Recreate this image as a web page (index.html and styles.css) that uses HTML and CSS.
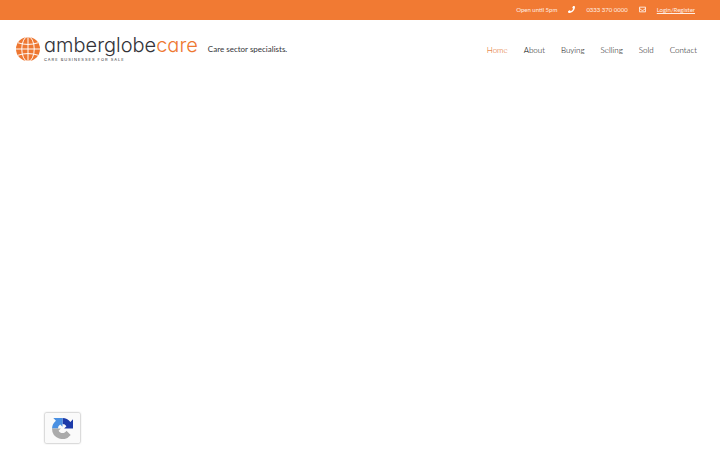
FILE: index.html
```
<!DOCTYPE html>
<html lang="en">
<head>
<meta charset="utf-8">
<title>Amberglobe Care</title>
<link rel="stylesheet" href="styles.css">
</head>
<body>
<div class="topbar">
  <span>Open until 5pm</span>
  <svg class="icon" viewBox="0 0 512 512" aria-hidden="true"><path fill="currentColor" d="M493 25 389 1c-11-3-23 3-27 14l-48 112c-4 10-1 21 7 28l60 49c-36 76-98 139-177 177l-49-60c-7-8-18-11-28-7L15 362c-11 4-17 16-14 27l24 104c2 11 12 19 23 19 256 0 464-207 464-464 0-11-8-21-19-23z"/></svg>
  <a href="tel:03333700000">0333 370 0000</a>
  <svg class="icon" viewBox="0 0 512 512" aria-hidden="true"><path fill="none" stroke="currentColor" stroke-width="60" stroke-linejoin="round" d="M30 85h452v342H30zM30 180l171 125q55 42 110 0l171-125"/></svg>
  <a class="login" href="#">Login/Register</a>
</div>
<header class="header">
  <a class="logo" href="#">
    <svg class="globe" viewBox="0 0 50 50" aria-hidden="true">
      <circle cx="25" cy="25" r="25" fill="#ee7731"/>
      <g fill="none" stroke="#fff" stroke-width="2"><path d="M25 0v50M0 25h50M4 12q21 7 42 0M4 38q21-7 42 0"/><ellipse cx="25" cy="25" rx="13" ry="26"/></g>
    </svg>
    <span class="brand">
      <span class="name">amberglobe<span class="care">care</span></span>
      <span class="strap">CARE BUSINESSES FOR SALE</span>
    </span>
  </a>
  <p class="tagline">Care sector specialists.</p>
  <nav class="nav">
    <a class="active" href="#">Home</a>
    <a href="#">About</a>
    <a href="#">Buying</a>
    <a href="#">Selling</a>
    <a href="#">Sold</a>
    <a href="#">Contact</a>
  </nav>
</header>
<div class="badge">
  <svg viewBox="0 0 64 64" role="img" aria-label="reCAPTCHA">
    <path fill="#1c3aa9" d="M64 32V4l-8 8A32 32 0 0 0 32 0v18a14 14 0 0 1 12 7l-7 7z"/>
    <path fill="#4a90e2" d="M32 0H4l8 8A32 32 0 0 0 0 32h18a14 14 0 0 1 7-12l7 7z"/>
    <path fill="#ababab" d="M0 32a32 32 0 0 0 57 20L44 39a14 14 0 0 1-24 0l7-7z"/>
  </svg>
</div>
</body>
</html>
```
FILE: styles.css
```
* {
  box-sizing: border-box;
}

body {
  margin: 0;
  background: #fff;
  color: #333338;
  font-family: Lato, sans-serif;
}

a {
  color: inherit;
  text-decoration: none;
}

.topbar {
  display: flex;
  align-items: center;
  justify-content: flex-end;
  gap: 11px;
  height: 20px;
  padding: 0 25px 1px 0;
  background: #f17a33;
  color: #ffeee4;
  font-size: 6px;
}

.icon {
  width: 7px;
  height: 7px;
  color: #fff;
}

.login {
  text-decoration: underline;
}

.header {
  display: flex;
  align-items: center;
  padding: 14px 23px 0 16px;
}

.logo {
  display: flex;
  align-items: center;
  gap: 4px;
}

.globe {
  width: 24px;
  height: 24px;
}

.brand {
  display: flex;
  flex-direction: column;
}

.name {
  font-family: Inter, sans-serif;
  font-feature-settings: "cv11";
  font-size: 20px;
  font-weight: 300;
  line-height: 23px;
}

.care {
  color: #ee7731;
}

.strap {
  font-family: Inter, sans-serif;
  font-size: 4px;
  line-height: 6px;
  letter-spacing: 1px;
}

.tagline {
  margin: 0 0 0 10px;
  font-size: 8px;
}

.nav {
  display: flex;
  gap: 16px;
  margin-left: auto;
  padding-top: 2px;
  color: #000;
  font-size: 8px;
  font-weight: 300;
}

.active {
  color: #dc5600;
}

.badge {
  position: fixed;
  bottom: 7px;
  left: 45px;
  display: grid;
  place-items: center;
  width: 35px;
  height: 30px;
  border-radius: 1px;
  background: #fafafa;
  box-shadow: 0 0 2px #777;
}

.badge svg {
  width: 21px;
  height: 21px;
}
```
